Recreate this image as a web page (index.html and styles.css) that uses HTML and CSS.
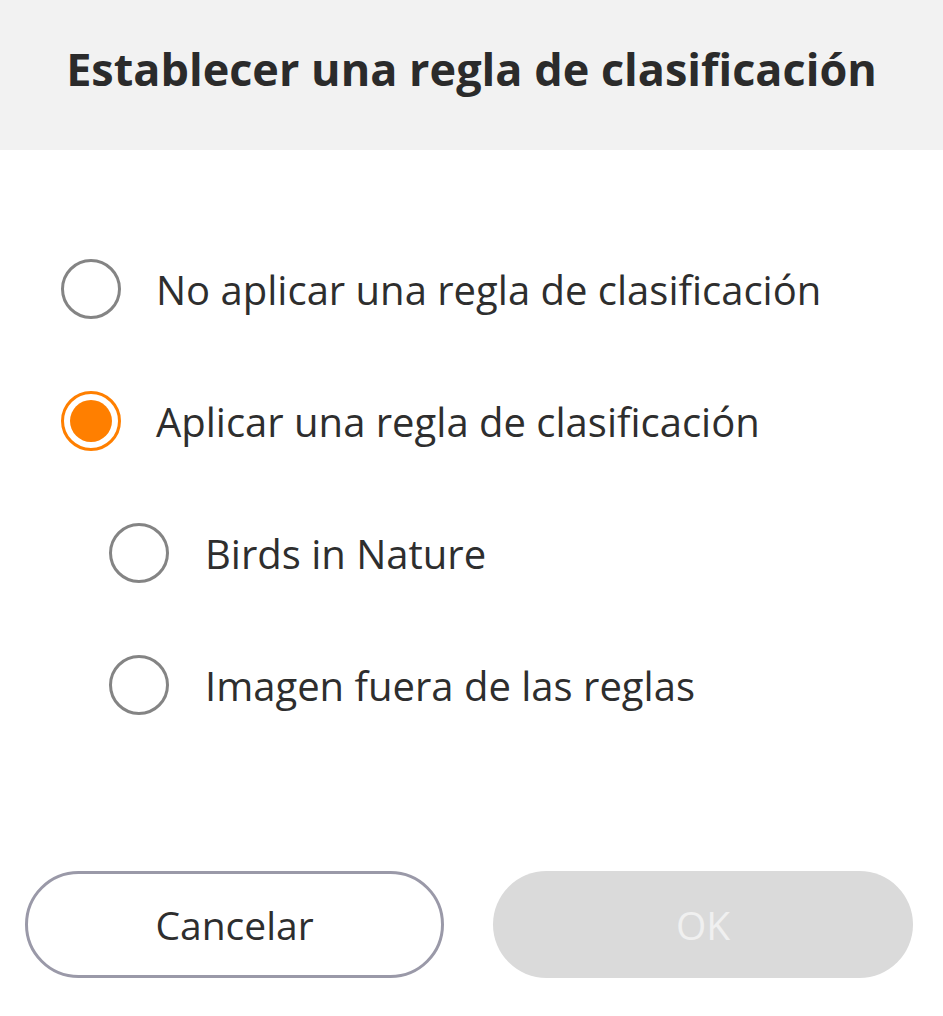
FILE: index.html
```html
<!DOCTYPE html>
<html lang="es">
<head>
<meta charset="utf-8">
<title>Establecer una regla de clasificación</title>
<link rel="stylesheet" href="styles.css">
</head>
<body>
<div class="dialog">
  <header class="header">
    <h1 class="title">Establecer una regla de clasificación</h1>
  </header>
  <div class="options">
    <div class="option">
      <span class="radio"></span>
      <span class="label">No aplicar una regla de clasificación</span>
    </div>
    <div class="option">
      <span class="radio checked"><span class="dot"></span></span>
      <span class="label">Aplicar una regla de clasificación</span>
    </div>
    <div class="option sub">
      <span class="radio"></span>
      <span class="label">Birds in Nature</span>
    </div>
    <div class="option sub">
      <span class="radio"></span>
      <span class="label">Imagen fuera de las reglas</span>
    </div>
  </div>
  <div class="actions">
    <button class="btn btn-cancel">Cancelar</button>
    <button class="btn btn-ok" disabled>OK</button>
  </div>
</div>
</body>
</html>
```

FILE: styles.css
```css
* { box-sizing: border-box; }
html, body {
  margin: 0;
  padding: 0;
  background: #ffffff;
}
body {
  font-family: "Open Sans", "Noto Sans", sans-serif;
  color: #2e2e2e;
  width: 943px;
  height: 1016px;
  overflow: hidden;
}
.dialog {
  display: flex;
  flex-direction: column;
  height: 1016px;
}
.header {
  height: 150px;
  background: #f2f2f2;
  display: flex;
  justify-content: center;
  align-items: center;
  padding-bottom: 14px;
}
.title {
  margin: 0;
  font-size: 45px;
  font-weight: 700;
  color: #2b2b2b;
}
.options {
  padding-top: 73px;
  padding-left: 61px;
  display: flex;
  flex-direction: column;
}
.option {
  height: 132px;
  display: flex;
  align-items: center;
  gap: 35px;
}
.option.sub {
  padding-left: 48px;
  gap: 36px;
}
.radio {
  width: 60px;
  height: 60px;
  border: 3px solid #848484;
  border-radius: 50%;
  flex: none;
  display: flex;
  align-items: center;
  justify-content: center;
}
.radio.checked {
  border-color: #ff7f00;
}
.dot {
  width: 42px;
  height: 42px;
  border-radius: 50%;
  background: #ff7f00;
}
.label {
  font-size: 40px;
  color: #2e2e2e;
}
.actions {
  margin-top: auto;
  margin-bottom: 38px;
  padding-left: 25px;
  display: flex;
  gap: 49px;
}
.btn {
  height: 107px;
  border-radius: 54px;
  font-family: inherit;
  font-size: 39px;
  padding: 0;
}
.btn-cancel {
  width: 419px;
  background: #ffffff;
  border: 3px solid #9a99a8;
  color: #2e2e2e;
}
.btn-ok {
  width: 420px;
  background: #dadada;
  border: none;
  color: #f0f0f0;
}
```
